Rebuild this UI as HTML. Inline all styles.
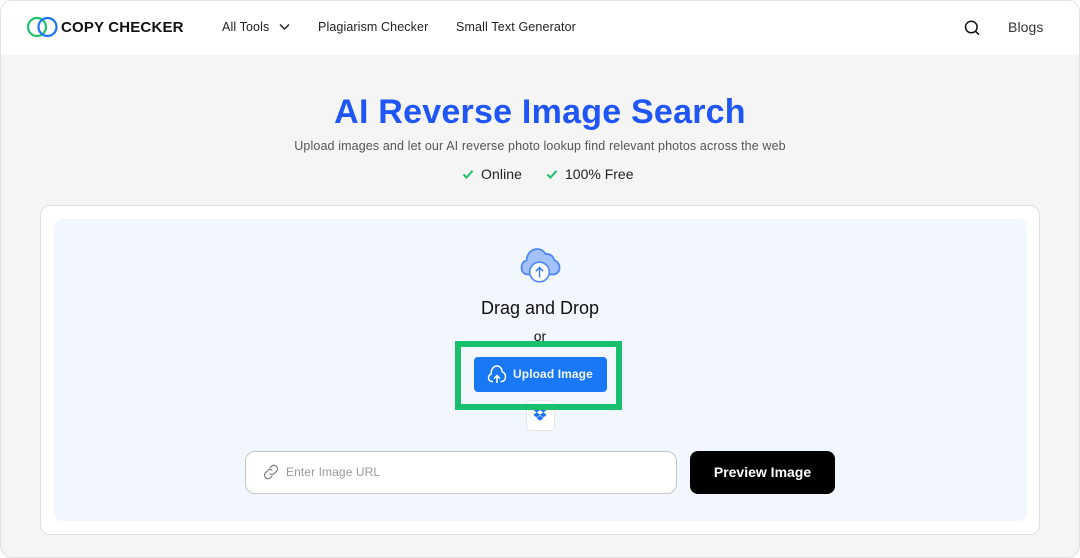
<!DOCTYPE html>
<html><head><meta charset="utf-8"><style>
html,body{margin:0;padding:0;background:#fff}
#p{position:relative;width:1080px;height:558px;overflow:hidden;background:#fff;font-family:"Liberation Sans",sans-serif}
#f{position:absolute;left:0;top:0;width:1078px;height:556px;border:1px solid #e2e2e2;border-radius:12px;background:#f5f5f5;overflow:hidden}
#h{position:absolute;left:0;top:0;width:1078px;height:54px;background:#fff}
.t{position:absolute;white-space:nowrap}
.a{position:absolute;display:block}
</style></head><body><div id="p">
<div id="f"><div id="h"></div></div>
<svg class="a" style="left:26px;top:16px" width="34" height="22" viewBox="0 0 34 22" fill="none"><circle cx="11" cy="11" r="9" stroke="#1fc16b" stroke-width="2.2"/><circle cx="21.5" cy="11" r="9" stroke="#1c74f5" stroke-width="2.2"/></svg>
<div class="t" style="left:61px;top:19px;font-size:15px;line-height:18px;font-weight:700;color:#111;letter-spacing:.17px">COPY CHECKER</div>
<div class="t" style="left:222px;top:20px;font-size:12.5px;line-height:15px;color:#222;letter-spacing:.12px">All Tools</div>
<svg class="a" style="left:278px;top:22px" width="13" height="10" viewBox="0 0 13 10" fill="none"><path d="M2 2.500 6.500 7 11 2.500" stroke="#222" stroke-width="1.500"/></svg>
<div class="t" style="left:318px;top:20px;font-size:12.5px;line-height:15px;color:#222;letter-spacing:.11px">Plagiarism Checker</div>
<div class="t" style="left:456px;top:20px;font-size:12.5px;line-height:15px;color:#222;letter-spacing:.14px">Small Text Generator</div>
<svg class="a" style="left:963px;top:19px" width="18" height="18" viewBox="0 0 18 18" fill="none"><circle cx="8.300" cy="8" r="5.800" stroke="#111" stroke-width="1.500"/><path d="M12.500 12.200 16 15.700" stroke="#111" stroke-width="1.500"/></svg>
<div class="t" style="left:1008px;top:19px;font-size:14px;line-height:16px;color:#333;letter-spacing:.1px">Blogs</div>

<div class="t" style="left:0;width:1080px;text-align:center;top:92px;font-size:34px;line-height:40px;font-weight:700;color:#1f56f5;letter-spacing:.23px">AI Reverse Image Search</div>
<div class="t" style="left:0;width:1080px;text-align:center;top:138px;font-size:12.5px;line-height:16px;color:#555;letter-spacing:.125px">Upload images and let our AI reverse photo lookup find relevant photos across the web</div>
<svg class="a" style="left:462px;top:168px" width="12" height="12" viewBox="0 0 12 12" fill="none"><path d="M1.500 6.500 4.500 9.500 10.500 2.800" stroke="#1fc16b" stroke-width="2"/></svg>
<div class="t" style="left:481px;top:166px;font-size:14px;line-height:17px;color:#222;letter-spacing:.1px">Online</div>
<svg class="a" style="left:546px;top:168px" width="12" height="12" viewBox="0 0 12 12" fill="none"><path d="M1.500 6.500 4.500 9.500 10.500 2.800" stroke="#1fc16b" stroke-width="2"/></svg>
<div class="t" style="left:565px;top:166px;font-size:14px;line-height:17px;color:#222;letter-spacing:0">100% Free</div>

<div class="a" style="left:40px;top:205px;width:998px;height:328px;background:#fff;border:1px solid #e0e0e0;border-radius:10px"></div>
<div class="a" style="left:54px;top:219px;width:973px;height:302px;background:#f2f7fe;border-radius:8px"></div>

<svg class="a" style="left:518px;top:247px" width="44" height="38" viewBox="0 0 44 38" fill="none">
<path d="M10 27.500C5.500 27.500 3.500 24 3.500 20.500C3.500 17 5.500 14.500 8.500 13.500C9 6.500 13.500 2 19 2C23 2 26 4 27.500 7C32.500 6.500 35.500 9.500 36 13C39.500 14.500 41.500 17 41.500 20.500C41.500 24.500 39 27.500 35 27.500Z" fill="#a3c2fa" stroke="#4f86f6" stroke-width="1.800"/>
<circle cx="21.500" cy="25" r="9.800" fill="#fff" stroke="#4f86f6" stroke-width="1.600"/>
<path d="M21.500 30.500V20.500M17.800 24.200 21.500 20.500 25.200 24.200" stroke="#3f7bf5" stroke-width="1.500"/></svg>
<div class="t" style="left:0;width:1080px;text-align:center;top:298px;font-size:18px;line-height:21px;color:#111;letter-spacing:0">Drag and Drop</div>
<div class="t" style="left:0;width:1080px;text-align:center;top:328px;font-size:14px;line-height:17px;color:#111">or</div>

<div class="a" style="left:526px;top:400px;width:27px;height:29px;background:#fff;border:1px solid #e4e6ea;border-radius:4px"></div>
<svg class="a" style="left:533px;top:405px" width="14" height="18" viewBox="0 0 17 18"><path d="M4.500 1 8.500 4 4.500 7 .5 4ZM12.500 1 16.500 4 12.500 7 8.500 4ZM4.500 7 8.500 10 4.500 13 .5 10ZM12.500 7 16.500 10 12.500 13 8.500 10ZM4.500 14 8.500 11 12.500 14 8.500 17Z" fill="#1c74f5" stroke="#1c74f5" stroke-width=".3"/></svg>

<div class="a" style="left:455px;top:341px;width:155px;height:57px;border:6px solid #18bf6c"></div>
<div class="a" style="left:474px;top:357px;width:133px;height:35px;background:#1878f5;border-radius:4px"></div>
<svg class="a" style="left:487px;top:364px" width="20" height="20" viewBox="0 0 20 20" fill="none"><path d="M6 17.500H5C2.800 17.500 1.500 15.800 1.500 13.800C1.500 12 2.600 10.600 4.200 10.200C3.800 5.500 6.500 2 10 2C13 2 15 4.500 15.200 7.800C17.200 8.500 18.500 10.300 18.500 12.800C18.500 15.500 16.800 17.500 14.500 17.500H13.500" stroke="#fff" stroke-width="1.500"/><path d="M10 19V11.500M7 14.500 10 11.500 13 14.500" stroke="#fff" stroke-width="1.500"/></svg>
<div class="t" style="left:513px;top:367px;font-size:12px;line-height:15px;font-weight:700;color:#f2f7ff;letter-spacing:.1px">Upload Image</div>

<div class="a" style="left:245px;top:451px;width:432px;height:43px;box-sizing:border-box;background:#fff;border:1px solid #c6c6c6;border-radius:10px"></div>
<svg class="a" style="left:263px;top:464px" width="16" height="16" viewBox="0 0 17 17" fill="none"><path d="M7 4.500 9 2.500C10.500 1 12.800 1 14.300 2.500C15.800 4 15.800 6.300 14.300 7.800L12 10C10.500 11.500 8.500 11.500 7 10M10 12.500 8 14.500C6.500 16 4.200 16 2.700 14.500C1.200 13 1.200 10.700 2.700 9.200L5 7C6.500 5.500 8.500 5.500 10 7" stroke="#808080" stroke-width="1.300"/></svg>
<div class="t" style="left:286px;top:465px;font-size:12px;line-height:15px;color:#9a9a9a;letter-spacing:.1px">Enter Image URL</div>
<div class="a" style="left:690px;top:451px;width:145px;height:43px;background:#000;border-radius:8px"></div>
<div class="t" style="left:690px;width:145px;text-align:center;top:464px;font-size:14px;line-height:17px;font-weight:700;color:#fff">Preview Image</div>
</div></body></html>
